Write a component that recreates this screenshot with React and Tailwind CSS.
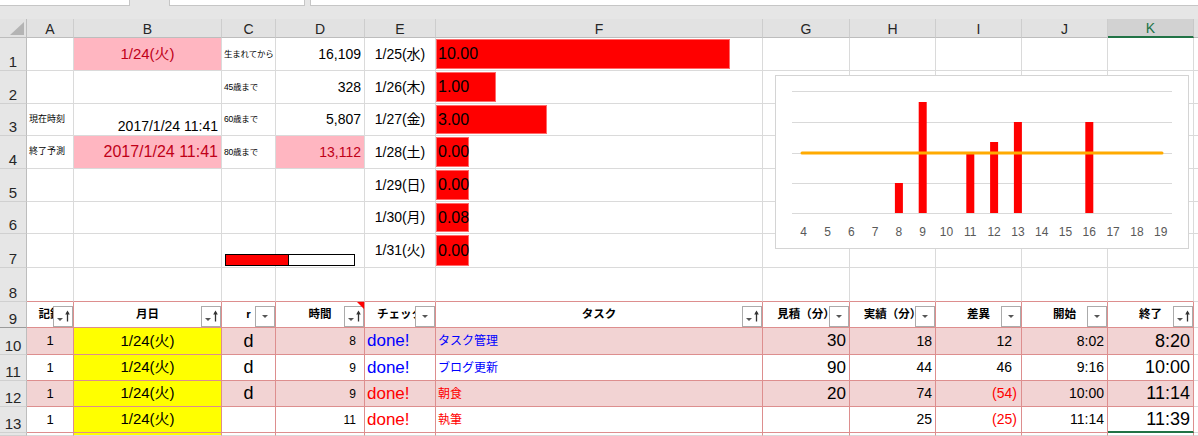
import React from 'react';
import clsx from 'clsx';

const W = ['w-[47px]', 'w-[148px]', 'w-[54px]', 'w-[89px]', 'w-[71px]', 'w-[327px]', 'w-[87px]', 'w-[86px]', 'w-[86px]', 'w-[86px]', 'w-[86px]'];
const LETTERS = ['A', 'B', 'C', 'D', 'E', 'F', 'G', 'H', 'I', 'J', 'K'];

const GRID_R = 'border-r-[#dadada]';
const GRID_B = 'border-b-[#dadada]';
const RED_R = 'border-r-[#dd8e8e]';
const RED_B = 'border-b-[#dd8e8e]';

function Cell({ i, rc = GRID_R, bc = GRID_B, className, children }) {
  return (
    <div className={clsx(W[i], 'relative shrink-0 h-full border-r border-b flex items-center overflow-hidden whitespace-nowrap', rc, bc, className)}>
      {children}
    </div>
  );
}

function Row({ h, num, headB = 'border-b-[#d0d0d0]', children }) {
  return (
    <div className={clsx('flex', h)}>
      <div className={clsx('w-[27px] shrink-0 h-full bg-[#e6e6e6] border-r border-b border-r-[#bdbdbd] flex items-end justify-center pb-[1px] text-[15px] leading-none text-[#262626]', headB)}>
        {num}
      </div>
      {children}
      <div className="flex-1 h-full border-b border-b-[#dadada]" />
    </div>
  );
}

function FilterBtn({ sorted }) {
  return (
    <div className="absolute right-0 bottom-0 w-[20px] h-[21px] border border-[#ababab] bg-white">
      <svg width="18" height="19" viewBox="0 0 18 19" className="block">
        {sorted ? (
          <>
            <polygon points="3,11 9,11 6,14" fill="#555" />
            <line x1="13.5" y1="5" x2="13.5" y2="14.5" stroke="#333" strokeWidth="1.3" />
            <polygon points="11.2,7.5 13.5,3.5 15.8,7.5" fill="#333" />
          </>
        ) : (
          <polygon points="6,8 12,8 9,11" fill="#555" />
        )}
      </svg>
    </div>
  );
}

function Bar({ w, v }) {
  return (
    <>
      <div className="absolute left-0 top-[1px] bottom-[1px] bg-[#ff0000] border border-[#ff6a6a]" style={{ width: w }} />
      <span className="relative pl-[2px] text-[16px] text-black">{v}</span>
    </>
  );
}

const dates = ['1/25(水)', '1/26(木)', '1/27(金)', '1/28(土)', '1/29(日)', '1/30(月)', '1/31(火)'];
const bars = [
  { w: 294, v: '10.00' },
  { w: 60, v: '1.00' },
  { w: 111, v: '3.00' },
  { w: 33, v: '0.00' },
  { w: 33, v: '0.00' },
  { w: 33, v: '0.08' },
  { w: 33, v: '0.00' },
];
const topH = ['h-[33px]', 'h-[33px]', 'h-[32px]', 'h-[33px]', 'h-[33px]', 'h-[32px]', 'h-[34px]'];

const tasks = [
  { h: 'h-[27px]', pink: true, c: 'd', t: '8', blue: true, task: 'タスク管理', g: '30', hh: '18', diff: '12', neg: false, s: '8:02', e: '8:20' },
  { h: 'h-[26px]', pink: false, c: 'd', t: '9', blue: true, task: 'ブログ更新', g: '90', hh: '44', diff: '46', neg: false, s: '9:16', e: '10:00' },
  { h: 'h-[26px]', pink: true, c: 'd', t: '9', blue: false, task: '朝食', g: '20', hh: '74', diff: '(54)', neg: true, s: '10:00', e: '11:14' },
  { h: 'h-[26px]', pink: false, c: '', t: '11', blue: false, task: '執筆', g: '', hh: '25', diff: '(25)', neg: true, s: '11:14', e: '11:39' },
];

const headers = [
  { t: '記録', sorted: true },
  { t: '月日', sorted: true },
  { t: 'r', sorted: false },
  { t: '時間', sorted: true },
  { t: 'チェック', sorted: false },
  { t: 'タスク', sorted: true },
  { t: '見積（分）', sorted: false },
  { t: '実績（分）', sorted: false },
  { t: '差異', sorted: false },
  { t: '開始', sorted: false },
  { t: '終了', sorted: true },
];

const chartBars = [
  { n: 8, top: 107 },
  { n: 9, top: 26 },
  { n: 11, top: 78 },
  { n: 12, top: 66 },
  { n: 13, top: 46 },
  { n: 16, top: 46 },
];
const lx = (n) => 27.7 + (n - 4) * 23.8;

function Chart() {
  const labels = [];
  for (let n = 4; n <= 19; n++) labels.push(n);
  return (
    <div className="absolute left-[775px] top-[75px] w-[414px] h-[174px] border border-[#d4d4d4] bg-white">
      <svg width="412" height="172" className="block">
        {[15, 46, 77, 107, 137].map((y) => (
          <line key={y} x1="16" x2="396" y1={y + 0.5} y2={y + 0.5} stroke="#d9d9d9" strokeWidth="1" />
        ))}
        {chartBars.map((b) => (
          <rect key={b.n} x={lx(b.n) - 4} y={b.top} width="8" height={137 - b.top} fill="#ff0000" />
        ))}
        <line x1="26" x2="386" y1="77" y2="77" stroke="#ffaa00" strokeWidth="3" strokeLinecap="round" />
        {labels.map((n) => (
          <text key={n} x={lx(n)} y="160" textAnchor="middle" fontSize="12" fill="#595959" fontFamily="Liberation Sans, sans-serif">
            {n}
          </text>
        ))}
      </svg>
    </div>
  );
}

export default function App() {
  return (
    <div className="relative w-[1198px] h-[436px] overflow-hidden bg-white text-black [font-family:'Liberation_Sans','Noto_Sans_CJK_JP',sans-serif]">
      {/* ribbon strip */}
      <div className="h-[19px] bg-[#e6e6e6] flex items-start gap-0">
        <div className="w-[130px] h-[6px] bg-white border-r border-b border-[#c6c6c6]" />
        <div className="w-[39px]" />
        <div className="w-[136px] h-[6px] bg-white border-x border-b border-[#c6c6c6]" />
        <div className="w-[5px]" />
        <div className="flex-1 h-[6px] bg-white border-l border-b border-[#c6c6c6]" />
      </div>

      {/* column headers */}
      <div className="flex h-[19px] bg-[#e2e2e2]">
        <div className="w-[27px] shrink-0 h-full border-r border-b border-r-[#bdbdbd] border-b-[#bdbdbd] relative">
          <svg width="26" height="18" className="absolute left-0 top-0">
            <polygon points="10,16 24,16 24,3" fill="#b4b4b4" />
          </svg>
        </div>
        {LETTERS.map((l, i) => (
          <div
            key={l}
            className={clsx(
              W[i],
              'shrink-0 h-full border-r flex items-end justify-center pb-[1px] text-[14px] leading-none',
              l === 'K' ? 'bg-[#d2d2d2] border-b-2 border-b-[#217346] text-[#217346] border-r-[#c8c8c8]' : 'border-b border-b-[#bdbdbd] border-r-[#cdcdcd] text-[#262626]'
            )}
          >
            {l}
          </div>
        ))}
        <div className="flex-1 h-full border-b border-b-[#bdbdbd]" />
      </div>

      {/* rows 1-7 */}
      {topH.map((h, r) => (
        <Row key={r} h={h} num={r + 1}>
          <Cell i={0} className="pl-[2px] text-[9px]">
            {r === 2 ? '現在時刻' : r === 3 ? '終了予測' : ''}
          </Cell>
          <Cell
            i={1}
            className={clsx(
              r === 0 && 'bg-[#ffb6c1] justify-center text-[15px] text-[#c00018]',
              r === 2 && 'justify-end items-end pr-[3px] pb-[2px] text-[14px] leading-none',
              r === 3 && 'bg-[#ffb6c1] justify-end pr-[3px] text-[16px] text-[#c00018]'
            )}
          >
            {r === 0 ? '1/24(火)' : r === 2 || r === 3 ? '2017/1/24 11:41' : ''}
          </Cell>
          <Cell i={2} className="pl-[2px] text-[8.5px] tracking-[-0.2px]">
            {['生まれてから', '45歳まで', '60歳まで', '80歳まで'][r] || ''}
          </Cell>
          <Cell
            i={3}
            className={clsx('justify-end pr-[3px] text-[14px]', r === 3 && 'bg-[#ffb6c1] text-[#c00018]')}
          >
            {['16,109', '328', '5,807', '13,112'][r] || ''}
          </Cell>
          <Cell i={4} className="justify-center text-[14px]">
            {dates[r]}
          </Cell>
          <Cell i={5}>
            <Bar w={bars[r].w} v={bars[r].v} />
          </Cell>
          {[6, 7, 8, 9, 10].map((i) => (
            <Cell key={i} i={i} />
          ))}
        </Row>
      ))}

      {/* row 8 */}
      <Row h="h-[34px]" num={8}>
        {LETTERS.map((l, i) => (
          <Cell key={l} i={i} bc={RED_B} />
        ))}
      </Row>

      {/* row 9: table header */}
      <Row h="h-[26px]" num={9} headB="border-b-[#9b9b9b]">
        {headers.map((hd, i) => (
          <Cell key={hd.t} i={i} rc={RED_R} bc={RED_B} className="justify-center bg-white text-[11.5px] font-bold">
            <span className="block">{hd.t}</span>
            <FilterBtn sorted={hd.sorted} />
            {i === 3 && (
              <svg width="7" height="7" className="absolute right-0 top-0">
                <polygon points="0,0 7,0 7,7" fill="#ff0000" />
              </svg>
            )}
          </Cell>
        ))}
      </Row>

      {/* data rows */}
      {tasks.map((t, r) => {
        const bg = t.pink ? 'bg-[#f2d3d3]' : 'bg-white';
        const col = t.blue ? 'text-[#0000ff]' : 'text-[#ff0000]';
        return (
          <Row key={r} h={t.h} num={10 + r}>
            <Cell i={0} rc={RED_R} bc={RED_B} className={clsx(bg, 'justify-center text-[13px]')}>1</Cell>
            <Cell i={1} rc={RED_R} bc={RED_B} className="bg-[#ffff00] justify-center text-[15px]">1/24(火)</Cell>
            <Cell i={2} rc={RED_R} bc={RED_B} className={clsx(bg, 'justify-center text-[18px]')}>{t.c}</Cell>
            <Cell i={3} rc={RED_R} bc={RED_B} className={clsx(bg, 'justify-end pr-[8px] text-[12px]')}>{t.t}</Cell>
            <Cell i={4} rc={RED_R} bc={RED_B} className={clsx(bg, col, 'pl-[2px] text-[17px]')}>done!</Cell>
            <Cell i={5} rc={RED_R} bc={RED_B} className={clsx(bg, col, 'pl-[2px] text-[12px]')}>{t.task}</Cell>
            <Cell i={6} rc={RED_R} bc={RED_B} className={clsx(bg, 'justify-end pr-[3px] text-[17px]')}>{t.g}</Cell>
            <Cell i={7} rc={RED_R} bc={RED_B} className={clsx(bg, 'justify-end pr-[3px] text-[14px]')}>{t.hh}</Cell>
            <Cell
              i={8}
              rc={RED_R}
              bc={RED_B}
              className={clsx(bg, 'justify-end text-[14px]', t.neg ? 'pr-[4px] text-[#ff0000]' : 'pr-[9px]')}
            >
              {t.diff}
            </Cell>
            <Cell i={9} rc={RED_R} bc={RED_B} className={clsx(bg, 'justify-end pr-[3px] text-[14px]')}>{t.s}</Cell>
            <Cell
              i={10}
              rc={RED_R}
              bc={r === 3 ? 'border-b-[#217346]' : RED_B}
              className={clsx(bg, 'justify-end pr-[3px] text-[18px]', r === 3 && 'border-b-2')}
            >
              {t.e}
            </Cell>
          </Row>
        );
      })}

      {/* partial row 14 */}
      <Row h="h-[3px]" num="">
        {LETTERS.map((l, i) => (
          <Cell key={l} i={i} rc={RED_R} className={i === 1 ? 'bg-[#ffff00]' : ''} />
        ))}
      </Row>

      {/* progress shape over C7:D7 */}
      <div className="absolute left-[225px] top-[254px] w-[130px] h-[12px] border border-black bg-white">
        <div className="h-full w-[63px] bg-[#ff0000] border-r border-black" />
      </div>

      <Chart />
    </div>
  );
}
